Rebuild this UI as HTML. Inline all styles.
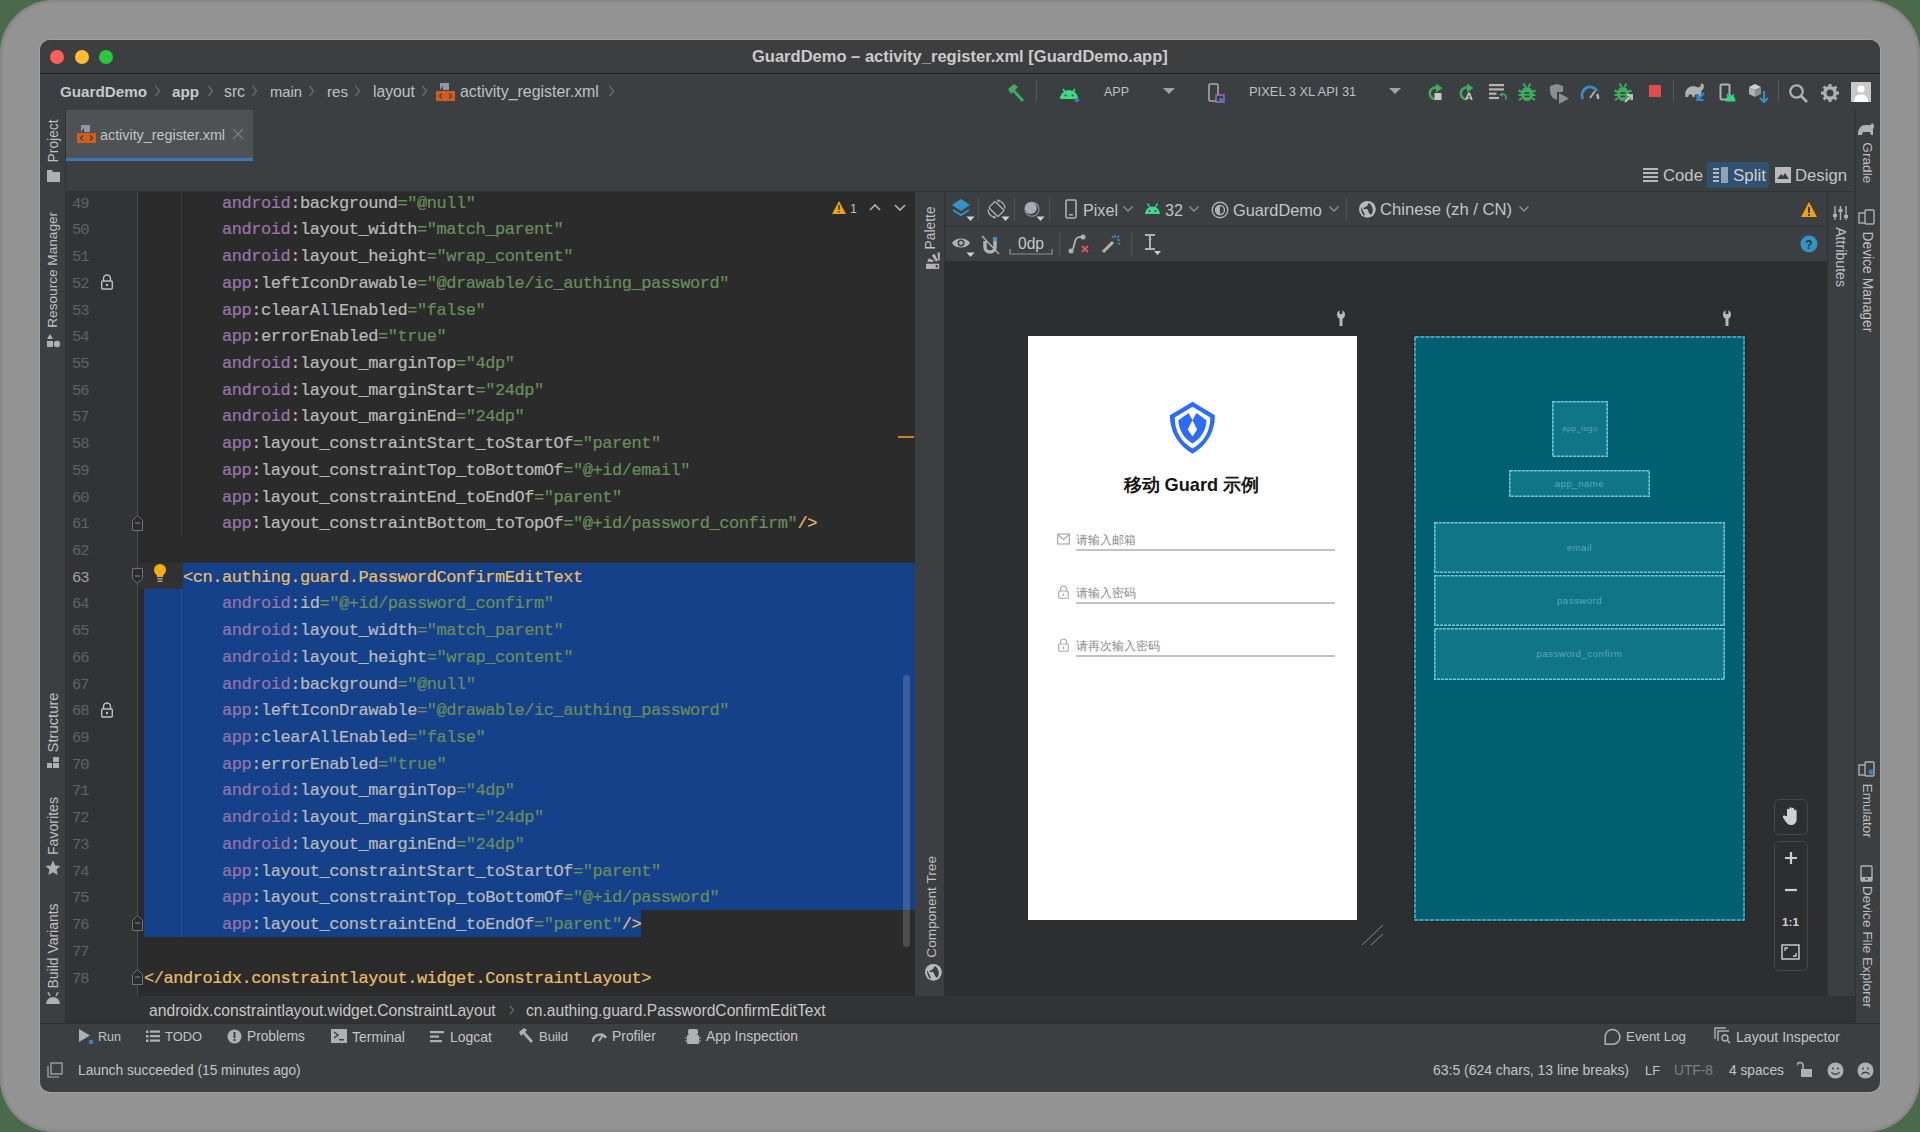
<!DOCTYPE html>
<html><head><meta charset="utf-8">
<style>
*{margin:0;padding:0;box-sizing:border-box}
html,body{width:1920px;height:1132px;overflow:hidden;background:#4b6a4b;font-family:"Liberation Sans",sans-serif}
.a{position:absolute}
.t{position:absolute;white-space:pre}
</style></head>
<body>
<div class="a" style="left:0px;top:0px;width:1920px;height:1132px;background:#939393;border-radius:54px;box-shadow:inset 0 0 2px 2px #858585;"></div>
<div class="a" style="left:40px;top:40px;width:1840px;height:1052px;background:#3c3f41;border-radius:10px;box-shadow:0 0 0 1px rgba(255,255,255,0.12);"></div>
<div class="a" style="left:40px;top:40px;width:1840px;height:33px;background:#3d3e40;border-radius:10px 10px 0 0;"></div>
<div class="a" style="left:40px;top:73px;width:1840px;height:1px;background:#1f2021;"></div>
<div class="a" style="left:50px;top:50px;width:14px;height:14px;background:#fe5f57;border-radius:50%;"></div>
<div class="a" style="left:75px;top:50px;width:14px;height:14px;background:#febc2e;border-radius:50%;"></div>
<div class="a" style="left:99px;top:50px;width:14px;height:14px;background:#28c840;border-radius:50%;"></div>
<div class="t" style="left:752px;top:48.74px;font-size:16.52px;line-height:16.52px;color:#cacaca;font-weight:bold;font-family:'Liberation Sans';">GuardDemo – activity_register.xml [GuardDemo.app]</div>
<div class="a" style="left:40px;top:74px;width:1840px;height:35px;background:#3c3f41;"></div>
<div class="t" style="left:60px;top:84.4px;font-size:15.2px;line-height:15.2px;color:#c8c8c8;font-weight:bold;font-family:'Liberation Sans';">GuardDemo</div>
<div class="t" style="left:172px;top:84.41px;font-size:15.19px;line-height:15.19px;color:#c8c8c8;font-weight:bold;font-family:'Liberation Sans';">app</div>
<div class="t" style="left:224px;top:84.12px;font-size:15.75px;line-height:15.75px;color:#c0c0c0;font-weight:normal;font-family:'Liberation Sans';">src</div>
<div class="t" style="left:270px;top:84.62px;font-size:14.76px;line-height:14.76px;color:#c0c0c0;font-weight:normal;font-family:'Liberation Sans';">main</div>
<div class="t" style="left:327px;top:84.44px;font-size:15.12px;line-height:15.12px;color:#c0c0c0;font-weight:normal;font-family:'Liberation Sans';">res</div>
<div class="t" style="left:373px;top:84.13px;font-size:15.74px;line-height:15.74px;color:#c0c0c0;font-weight:normal;font-family:'Liberation Sans';">layout</div>
<div class="t" style="left:460px;top:84.03px;font-size:15.93px;line-height:15.93px;color:#c0c0c0;font-weight:normal;font-family:'Liberation Sans';">activity_register.xml</div>
<svg class="a" style="left:154px;top:85px;" width="8" height="12" viewBox="0 0 8 12"><path d="M1.5 1 L5.5 6 L1.5 11" stroke="#6b6e70" stroke-width="1.3" fill="none"/></svg>
<svg class="a" style="left:207px;top:85px;" width="8" height="12" viewBox="0 0 8 12"><path d="M1.5 1 L5.5 6 L1.5 11" stroke="#6b6e70" stroke-width="1.3" fill="none"/></svg>
<svg class="a" style="left:251px;top:85px;" width="8" height="12" viewBox="0 0 8 12"><path d="M1.5 1 L5.5 6 L1.5 11" stroke="#6b6e70" stroke-width="1.3" fill="none"/></svg>
<svg class="a" style="left:308px;top:85px;" width="8" height="12" viewBox="0 0 8 12"><path d="M1.5 1 L5.5 6 L1.5 11" stroke="#6b6e70" stroke-width="1.3" fill="none"/></svg>
<svg class="a" style="left:354px;top:85px;" width="8" height="12" viewBox="0 0 8 12"><path d="M1.5 1 L5.5 6 L1.5 11" stroke="#6b6e70" stroke-width="1.3" fill="none"/></svg>
<svg class="a" style="left:421px;top:85px;" width="8" height="12" viewBox="0 0 8 12"><path d="M1.5 1 L5.5 6 L1.5 11" stroke="#6b6e70" stroke-width="1.3" fill="none"/></svg>
<svg class="a" style="left:608px;top:85px;" width="8" height="12" viewBox="0 0 8 12"><path d="M1.5 1 L5.5 6 L1.5 11" stroke="#6b6e70" stroke-width="1.3" fill="none"/></svg>
<svg class="a" style="left:436px;top:82px;" width="19" height="19" viewBox="0 0 19 19"><path d="M4 1 L13 1 L13 8 L4 8 Z" fill="#8a98a8"/><path d="M4 8 L7 4 L7 8Z" fill="#3c3f41"/><rect x="0" y="9" width="19" height="10" fill="#d35d1e"/><path d="M6 11.5 L3.5 14 L6 16.5 M13 11.5 L15.5 14 L13 16.5" stroke="#3c3f41" stroke-width="1.2" fill="none"/></svg>
<svg class="a" style="left:1005px;top:82.5px;" width="22" height="20" viewBox="0 0 22 20"><path d="M3 6 L9 1 L13 4 L10 7 L19 17 L17 19 L8 9 L6 11 Z" fill="#3fae5a"/></svg>
<div class="a" style="left:1036px;top:80px;width:1px;height:22px;background:#555759;"></div>
<svg class="a" style="left:1058px;top:84.5px;" width="22" height="17" viewBox="0 0 22 17"><path d="M2 14 A9 9 0 0 1 20 14 Z" fill="#3ddc84"/><path d="M5 4 L7 7 M17 4 L15 7" stroke="#3ddc84" stroke-width="1.6"/><circle cx="7.5" cy="10.5" r="1" fill="#3c3f41"/><circle cx="14.5" cy="10.5" r="1" fill="#3c3f41"/><circle cx="19" cy="15" r="2.2" fill="#3d7fc6"/></svg>
<div class="t" style="left:1104px;top:85.75px;font-size:12.49px;line-height:12.49px;color:#c0c0c0;font-weight:normal;font-family:'Liberation Sans';">APP</div>
<svg class="a" style="left:1162px;top:87px;" width="14" height="8" viewBox="0 0 14 8"><path d="M1 1 L13 1 L7 7 Z" fill="#a0a2a4"/></svg>
<svg class="a" style="left:1207px;top:82.5px;" width="20" height="22" viewBox="0 0 20 22"><rect x="2" y="1" width="9" height="17" rx="1.5" stroke="#a9abad" stroke-width="1.6" fill="none"/><rect x="9" y="12" width="8" height="7" stroke="#b06ac8" stroke-width="1.4" fill="#3c3f41"/><circle cx="14" cy="17" r="2" fill="#3d7fc6"/></svg>
<div class="t" style="left:1249px;top:85.55px;font-size:12.9px;line-height:12.9px;color:#c0c0c0;font-weight:normal;font-family:'Liberation Sans';">PIXEL 3 XL API 31</div>
<svg class="a" style="left:1388px;top:87px;" width="14" height="8" viewBox="0 0 14 8"><path d="M1 1 L13 1 L7 7 Z" fill="#a0a2a4"/></svg>
<svg class="a" style="left:1423px;top:80px;" width="22" height="22" viewBox="0 0 22 22"><path d="M13.4 7.6 A5.6 5.6 0 1 0 11.8 19.2" stroke="#3fae5a" stroke-width="2.6" fill="none"/><path d="M13 3.5 L19.5 8 L13 12.5 Z" fill="#3fae5a"/><rect x="11.5" y="13" width="7" height="7" fill="#c8c8c8"/></svg>
<svg class="a" style="left:1454px;top:80px;" width="22" height="22" viewBox="0 0 22 22"><path d="M13.4 7.6 A5.6 5.6 0 1 0 11.8 19.2" stroke="#3fae5a" stroke-width="2.6" fill="none"/><path d="M13 3.5 L19.5 8 L13 12.5 Z" fill="#3fae5a"/><path d="M11.2 20 L14 12.5 L16 12.5 L18.8 20 L17 20 L15 14.5 L13 20 Z M13.2 17.5 L16.8 17.5 L16.8 18.6 L13.2 18.6 Z" fill="#c8c8c8"/></svg>
<svg class="a" style="left:1487px;top:83px;" width="22" height="20" viewBox="0 0 22 20"><rect x="2" y="1" width="15" height="2.2" fill="#b4b4b4"/><rect x="2" y="5.3" width="15" height="2.2" fill="#b4b4b4"/><rect x="2" y="9.6" width="7.5" height="2.2" fill="#b4b4b4"/><rect x="2" y="13.9" width="10" height="2.2" fill="#b4b4b4"/><path d="M14 11.5 C17 10 20 12 18.5 16.5" stroke="#3fae5a" stroke-width="1.6" fill="none"/><path d="M12 11.8 L15.5 9.5 L15.5 13.8 Z" fill="#3fae5a"/></svg>
<svg class="a" style="left:1517px;top:81.5px;" width="22" height="22" viewBox="0 0 22 22"><ellipse cx="10" cy="12" rx="6" ry="7" fill="#3fae5a"/><path d="M1.5 8.5 L5 10 M18.5 8.5 L15 10 M1.5 13 L5 13 M18.5 13 L15 13 M2 18 L5 16 M18 18 L15 16 M6.5 1.5 L8.5 5 M13.5 1.5 L11.5 5" stroke="#3fae5a" stroke-width="2"/><rect x="7.5" y="10.2" width="5" height="1.6" fill="#3c3f41"/><rect x="7.5" y="13.6" width="5" height="1.6" fill="#3c3f41"/></svg>
<svg class="a" style="left:1548px;top:82.5px;" width="24" height="22" viewBox="0 0 24 22"><path d="M2 3 L9 1 L15 3 L15 9 L9 9 L9 17 L5 15 C3 13 2 10 2 7 Z" fill="#8c8e90"/><path d="M11 10 L21 15.5 L11 21 Z" fill="#8c8e90"/></svg>
<svg class="a" style="left:1580px;top:82.5px;" width="22" height="20" viewBox="0 0 22 20"><path d="M3 16 A8 8 0 0 1 17 8" stroke="#3592c4" stroke-width="2.6" fill="none"/><path d="M18 16 A8 8 0 0 0 17 11" stroke="#afb1b3" stroke-width="2.6" fill="none"/><path d="M10 15 L15 8" stroke="#afb1b3" stroke-width="2"/></svg>
<svg class="a" style="left:1613px;top:81.5px;" width="22" height="22" viewBox="0 0 22 22"><ellipse cx="10" cy="12" rx="6" ry="7" fill="#3fae5a"/><path d="M1.5 8.5 L5 10 M18.5 8.5 L15 10 M1.5 13 L5 13 M18.5 13 L15 13 M2 18 L5 16 M18 18 L15 16 M6.5 1.5 L8.5 5 M13.5 1.5 L11.5 5" stroke="#3fae5a" stroke-width="2"/><rect x="7.5" y="10.2" width="5" height="1.6" fill="#3c3f41"/><rect x="7.5" y="13.6" width="5" height="1.6" fill="#3c3f41"/><path d="M12 20 L19 13 M14 13 L19 13 L19 18" stroke="#c0c0c0" stroke-width="2" fill="none"/></svg>
<div class="a" style="left:1649px;top:85px;width:12px;height:12px;background:#db504a;"></div>
<div class="a" style="left:1673px;top:80px;width:1px;height:22px;background:#555759;"></div>
<svg class="a" style="left:1683px;top:81px;" width="24" height="22" viewBox="0 0 24 22"><path d="M2.5 16 C1.5 10 4 6.5 8 5.5 C11 4.8 13 5.5 15 6.5 C17 6 18.5 4.5 18 3.5 C17.5 2.5 19.5 2 20.5 3.5 C21.5 5 20.5 8.5 18.5 10 L18 16 L16 16 L15.5 13 L12 13.5 L11.5 16 L9.5 16 L9 13.5 L6 13.5 L5 16 Z" fill="#afb1b3"/><path d="M21 12 L15 18.5 M14.5 13 L14.5 19 L20.5 19" stroke="#2a8fd0" stroke-width="2.2" fill="none"/></svg>
<svg class="a" style="left:1716px;top:81px;" width="22" height="22" viewBox="0 0 22 22"><rect x="4.5" y="3.5" width="9" height="15" rx="1.2" stroke="#afb1b3" stroke-width="2" fill="none"/><path d="M9.5 20.5 C9.5 16 12 14 14.5 14 C17 14 19.5 16 19.5 20.5 Z" fill="#2fd97e"/><path d="M11 13 L12 15 M18 13 L17 15" stroke="#2fd97e" stroke-width="1.4"/></svg>
<svg class="a" style="left:1747px;top:81.5px;" width="22" height="22" viewBox="0 0 22 22"><path d="M2 5 L8 2 L14 5 L8 8 Z" fill="#d0d0d0"/><path d="M2 5 L8 8 L8 15 L2 12 Z" fill="#afb1b3"/><path d="M14 5 L8 8 L8 15 L14 12 Z" fill="#8a8c8e"/><path d="M17 9 L17 20 M13 16 L17 20 L21 16" stroke="#3592c4" stroke-width="2" fill="none"/></svg>
<div class="a" style="left:1778px;top:80px;width:1px;height:22px;background:#555759;"></div>
<svg class="a" style="left:1788px;top:82.5px;" width="22" height="22" viewBox="0 0 22 22"><circle cx="8.5" cy="8.5" r="6.2" stroke="#afb1b3" stroke-width="2.2" fill="none"/><path d="M13 13 L19 19" stroke="#afb1b3" stroke-width="2.6"/></svg>
<svg class="a" style="left:1820px;top:82.5px;" width="20" height="20" viewBox="0 0 20 20"><circle cx="10" cy="10" r="5.2" stroke="#afb1b3" stroke-width="3.4" fill="none"/><path d="M10 1 L10 4 M10 16 L10 19 M1 10 L4 10 M16 10 L19 10 M3.6 3.6 L5.8 5.8 M14.2 14.2 L16.4 16.4 M3.6 16.4 L5.8 14.2 M14.2 5.8 L16.4 3.6" stroke="#afb1b3" stroke-width="3"/></svg>
<svg class="a" style="left:1851px;top:81.5px;" width="20" height="20" viewBox="0 0 20 20"><rect x="0" y="0" width="20" height="20" fill="#c8c8c8"/><circle cx="10" cy="7" r="3.6" fill="#ffffff"/><path d="M3 20 C3 14 6 12.5 10 12.5 C14 12.5 17 14 17 20 Z" fill="#ffffff"/></svg>
<div class="a" style="left:40px;top:109px;width:26px;height:914px;background:#3c3f41;"></div>
<div class="a" style="left:65px;top:109px;width:1px;height:914px;background:#2f3133;"></div>
<div class="a" style="left:1855px;top:109px;width:25px;height:914px;background:#3c3f41;"></div>
<div class="a" style="left:1855px;top:109px;width:1px;height:914px;background:#2f3133;"></div>
<div class="a" style="left:66px;top:110px;width:187px;height:48px;background:#4e5254;"></div>
<div class="a" style="left:66px;top:158px;width:187px;height:3px;background:#3b77b5;"></div>
<svg class="a" style="left:77px;top:124px;" width="19" height="19" viewBox="0 0 19 19"><path d="M4 1 L13 1 L13 8 L4 8 Z" fill="#8a98a8"/><path d="M4 8 L7 4 L7 8Z" fill="#3c3f41"/><rect x="0" y="9" width="19" height="10" fill="#d35d1e"/><path d="M6 11.5 L3.5 14 L6 16.5 M13 11.5 L15.5 14 L13 16.5" stroke="#3c3f41" stroke-width="1.2" fill="none"/></svg>
<div class="t" style="left:100px;top:127.83px;font-size:14.33px;line-height:14.33px;color:#c4c4c4;font-weight:normal;font-family:'Liberation Sans';">activity_register.xml</div>
<svg class="a" style="left:232px;top:128px;" width="12" height="12" viewBox="0 0 12 12"><path d="M1 1 L11 11 M11 1 L1 11" stroke="#7c7e80" stroke-width="1.3"/></svg>
<svg class="a" style="left:1643px;top:167px;" width="16" height="16" viewBox="0 0 16 16"><rect x="0" y="1" width="15" height="2" fill="#b9b9b9"/><rect x="0" y="5" width="15" height="2" fill="#b9b9b9"/><rect x="0" y="9" width="15" height="2" fill="#b9b9b9"/><rect x="0" y="13" width="15" height="2" fill="#b9b9b9"/></svg>
<div class="t" style="left:1663px;top:167.63px;font-size:16.73px;line-height:16.73px;color:#c4c4c4;font-weight:normal;font-family:'Liberation Sans';">Code</div>
<div class="a" style="left:1707px;top:162px;width:62px;height:26px;background:#30516f;border-radius:3px;"></div>
<svg class="a" style="left:1713px;top:167px;" width="16" height="16" viewBox="0 0 16 16"><rect x="0" y="1" width="6" height="2" fill="#b9b9b9"/><rect x="0" y="5" width="6" height="2" fill="#b9b9b9"/><rect x="0" y="9" width="6" height="2" fill="#b9b9b9"/><rect x="0" y="13" width="6" height="2" fill="#b9b9b9"/><rect x="8" y="0" width="7" height="16" fill="#8fa3b8"/></svg>
<div class="t" style="left:1733px;top:167.52px;font-size:16.96px;line-height:16.96px;color:#d0d0d0;font-weight:normal;font-family:'Liberation Sans';">Split</div>
<svg class="a" style="left:1775px;top:167px;" width="16" height="16" viewBox="0 0 16 16"><rect x="0" y="0" width="16" height="16" fill="#b9b9b9"/><path d="M2 12 L6 7 L8 9 L10 6 L14 12 Z" fill="#3c3f41"/></svg>
<div class="t" style="left:1795px;top:167.65px;font-size:16.71px;line-height:16.71px;color:#c4c4c4;font-weight:normal;font-family:'Liberation Sans';">Design</div>
<div class="a" style="left:66px;top:191px;width:1789px;height:1px;background:#2f3133;"></div>
<div class="a" style="left:66px;top:192px;width:849px;height:804px;background:#2b2b2b;"></div>
<div class="a" style="left:66px;top:192px;width:71px;height:804px;background:#313335;"></div>
<div class="a" style="left:137px;top:562.72px;width:46px;height:26.72px;background:#323232;"></div>
<div class="a" style="left:183px;top:562.72px;width:732px;height:26.72px;background:#15418a;"></div>
<div class="a" style="left:144px;top:589.44px;width:771px;height:320.64px;background:#15418a;"></div>
<div class="a" style="left:144px;top:910.08px;width:497px;height:26.72px;background:#15418a;"></div>
<div class="a" style="left:181px;top:192px;width:1px;height:344.0px;background:#3b3b3b;"></div>
<div class="a" style="left:181px;top:589.44px;width:1px;height:347.36px;background:#2a5096;"></div>
<div class="a" style="left:137px;top:192px;width:1px;height:804px;background:#4a4c4e;"></div>
<div class="t" style="left:222.0px;top:190.64px;height:26.72px;line-height:26.72px;font-family:'Liberation Mono';font-size:17px;letter-spacing:-0.45px;-webkit-text-stroke:0.2px currentColor"><span style="color:#9876aa">android</span><span style="color:#bababa">:background</span><span style="color:#6a8e5b">=&quot;@null&quot;</span></div>
<div class="t" style="left:48.5px;width:40px;text-align:right;top:190.64px;letter-spacing:-1px;height:26.72px;line-height:26.72px;font-family:'Liberation Mono';font-size:15.5px;color:#606366">49</div>
<div class="t" style="left:222.0px;top:217.36px;height:26.72px;line-height:26.72px;font-family:'Liberation Mono';font-size:17px;letter-spacing:-0.45px;-webkit-text-stroke:0.2px currentColor"><span style="color:#9876aa">android</span><span style="color:#bababa">:layout_width</span><span style="color:#6a8e5b">=&quot;match_parent&quot;</span></div>
<div class="t" style="left:48.5px;width:40px;text-align:right;top:217.36px;letter-spacing:-1px;height:26.72px;line-height:26.72px;font-family:'Liberation Mono';font-size:15.5px;color:#606366">50</div>
<div class="t" style="left:222.0px;top:244.08px;height:26.72px;line-height:26.72px;font-family:'Liberation Mono';font-size:17px;letter-spacing:-0.45px;-webkit-text-stroke:0.2px currentColor"><span style="color:#9876aa">android</span><span style="color:#bababa">:layout_height</span><span style="color:#6a8e5b">=&quot;wrap_content&quot;</span></div>
<div class="t" style="left:48.5px;width:40px;text-align:right;top:244.08px;letter-spacing:-1px;height:26.72px;line-height:26.72px;font-family:'Liberation Mono';font-size:15.5px;color:#606366">51</div>
<div class="t" style="left:222.0px;top:270.8px;height:26.72px;line-height:26.72px;font-family:'Liberation Mono';font-size:17px;letter-spacing:-0.45px;-webkit-text-stroke:0.2px currentColor"><span style="color:#9876aa">app</span><span style="color:#bababa">:leftIconDrawable</span><span style="color:#6a8e5b">=&quot;@drawable/ic_authing_password&quot;</span></div>
<div class="t" style="left:48.5px;width:40px;text-align:right;top:270.8px;letter-spacing:-1px;height:26.72px;line-height:26.72px;font-family:'Liberation Mono';font-size:15.5px;color:#606366">52</div>
<div class="t" style="left:222.0px;top:297.52px;height:26.72px;line-height:26.72px;font-family:'Liberation Mono';font-size:17px;letter-spacing:-0.45px;-webkit-text-stroke:0.2px currentColor"><span style="color:#9876aa">app</span><span style="color:#bababa">:clearAllEnabled</span><span style="color:#6a8e5b">=&quot;false&quot;</span></div>
<div class="t" style="left:48.5px;width:40px;text-align:right;top:297.52px;letter-spacing:-1px;height:26.72px;line-height:26.72px;font-family:'Liberation Mono';font-size:15.5px;color:#606366">53</div>
<div class="t" style="left:222.0px;top:324.24px;height:26.72px;line-height:26.72px;font-family:'Liberation Mono';font-size:17px;letter-spacing:-0.45px;-webkit-text-stroke:0.2px currentColor"><span style="color:#9876aa">app</span><span style="color:#bababa">:errorEnabled</span><span style="color:#6a8e5b">=&quot;true&quot;</span></div>
<div class="t" style="left:48.5px;width:40px;text-align:right;top:324.24px;letter-spacing:-1px;height:26.72px;line-height:26.72px;font-family:'Liberation Mono';font-size:15.5px;color:#606366">54</div>
<div class="t" style="left:222.0px;top:350.96px;height:26.72px;line-height:26.72px;font-family:'Liberation Mono';font-size:17px;letter-spacing:-0.45px;-webkit-text-stroke:0.2px currentColor"><span style="color:#9876aa">android</span><span style="color:#bababa">:layout_marginTop</span><span style="color:#6a8e5b">=&quot;4dp&quot;</span></div>
<div class="t" style="left:48.5px;width:40px;text-align:right;top:350.96px;letter-spacing:-1px;height:26.72px;line-height:26.72px;font-family:'Liberation Mono';font-size:15.5px;color:#606366">55</div>
<div class="t" style="left:222.0px;top:377.68px;height:26.72px;line-height:26.72px;font-family:'Liberation Mono';font-size:17px;letter-spacing:-0.45px;-webkit-text-stroke:0.2px currentColor"><span style="color:#9876aa">android</span><span style="color:#bababa">:layout_marginStart</span><span style="color:#6a8e5b">=&quot;24dp&quot;</span></div>
<div class="t" style="left:48.5px;width:40px;text-align:right;top:377.68px;letter-spacing:-1px;height:26.72px;line-height:26.72px;font-family:'Liberation Mono';font-size:15.5px;color:#606366">56</div>
<div class="t" style="left:222.0px;top:404.4px;height:26.72px;line-height:26.72px;font-family:'Liberation Mono';font-size:17px;letter-spacing:-0.45px;-webkit-text-stroke:0.2px currentColor"><span style="color:#9876aa">android</span><span style="color:#bababa">:layout_marginEnd</span><span style="color:#6a8e5b">=&quot;24dp&quot;</span></div>
<div class="t" style="left:48.5px;width:40px;text-align:right;top:404.4px;letter-spacing:-1px;height:26.72px;line-height:26.72px;font-family:'Liberation Mono';font-size:15.5px;color:#606366">57</div>
<div class="t" style="left:222.0px;top:431.12px;height:26.72px;line-height:26.72px;font-family:'Liberation Mono';font-size:17px;letter-spacing:-0.45px;-webkit-text-stroke:0.2px currentColor"><span style="color:#9876aa">app</span><span style="color:#bababa">:layout_constraintStart_toStartOf</span><span style="color:#6a8e5b">=&quot;parent&quot;</span></div>
<div class="t" style="left:48.5px;width:40px;text-align:right;top:431.12px;letter-spacing:-1px;height:26.72px;line-height:26.72px;font-family:'Liberation Mono';font-size:15.5px;color:#606366">58</div>
<div class="t" style="left:222.0px;top:457.84px;height:26.72px;line-height:26.72px;font-family:'Liberation Mono';font-size:17px;letter-spacing:-0.45px;-webkit-text-stroke:0.2px currentColor"><span style="color:#9876aa">app</span><span style="color:#bababa">:layout_constraintTop_toBottomOf</span><span style="color:#6a8e5b">=&quot;@+id/email&quot;</span></div>
<div class="t" style="left:48.5px;width:40px;text-align:right;top:457.84px;letter-spacing:-1px;height:26.72px;line-height:26.72px;font-family:'Liberation Mono';font-size:15.5px;color:#606366">59</div>
<div class="t" style="left:222.0px;top:484.56px;height:26.72px;line-height:26.72px;font-family:'Liberation Mono';font-size:17px;letter-spacing:-0.45px;-webkit-text-stroke:0.2px currentColor"><span style="color:#9876aa">app</span><span style="color:#bababa">:layout_constraintEnd_toEndOf</span><span style="color:#6a8e5b">=&quot;parent&quot;</span></div>
<div class="t" style="left:48.5px;width:40px;text-align:right;top:484.56px;letter-spacing:-1px;height:26.72px;line-height:26.72px;font-family:'Liberation Mono';font-size:15.5px;color:#606366">60</div>
<div class="t" style="left:222.0px;top:511.28px;height:26.72px;line-height:26.72px;font-family:'Liberation Mono';font-size:17px;letter-spacing:-0.45px;-webkit-text-stroke:0.2px currentColor"><span style="color:#9876aa">app</span><span style="color:#bababa">:layout_constraintBottom_toTopOf</span><span style="color:#6a8e5b">=&quot;@+id/password_confirm&quot;</span><span style="color:#e8bf6a">/&gt;</span></div>
<div class="t" style="left:48.5px;width:40px;text-align:right;top:511.28px;letter-spacing:-1px;height:26.72px;line-height:26.72px;font-family:'Liberation Mono';font-size:15.5px;color:#606366">61</div>
<div class="t" style="left:48.5px;width:40px;text-align:right;top:538.0px;letter-spacing:-1px;height:26.72px;line-height:26.72px;font-family:'Liberation Mono';font-size:15.5px;color:#606366">62</div>
<div class="t" style="left:183.0px;top:564.72px;height:26.72px;line-height:26.72px;font-family:'Liberation Mono';font-size:17px;letter-spacing:-0.45px;-webkit-text-stroke:0.2px currentColor"><span style="color:#e8bf6a">&lt;cn.authing.guard.PasswordConfirmEditText</span></div>
<div class="t" style="left:48.5px;width:40px;text-align:right;top:564.72px;letter-spacing:-1px;height:26.72px;line-height:26.72px;font-family:'Liberation Mono';font-size:15.5px;color:#a4a3a3">63</div>
<div class="t" style="left:222.0px;top:591.44px;height:26.72px;line-height:26.72px;font-family:'Liberation Mono';font-size:17px;letter-spacing:-0.45px;-webkit-text-stroke:0.2px currentColor"><span style="color:#9876aa">android</span><span style="color:#bababa">:id</span><span style="color:#6a8e5b">=&quot;@+id/password_confirm&quot;</span></div>
<div class="t" style="left:48.5px;width:40px;text-align:right;top:591.44px;letter-spacing:-1px;height:26.72px;line-height:26.72px;font-family:'Liberation Mono';font-size:15.5px;color:#606366">64</div>
<div class="t" style="left:222.0px;top:618.16px;height:26.72px;line-height:26.72px;font-family:'Liberation Mono';font-size:17px;letter-spacing:-0.45px;-webkit-text-stroke:0.2px currentColor"><span style="color:#9876aa">android</span><span style="color:#bababa">:layout_width</span><span style="color:#6a8e5b">=&quot;match_parent&quot;</span></div>
<div class="t" style="left:48.5px;width:40px;text-align:right;top:618.16px;letter-spacing:-1px;height:26.72px;line-height:26.72px;font-family:'Liberation Mono';font-size:15.5px;color:#606366">65</div>
<div class="t" style="left:222.0px;top:644.88px;height:26.72px;line-height:26.72px;font-family:'Liberation Mono';font-size:17px;letter-spacing:-0.45px;-webkit-text-stroke:0.2px currentColor"><span style="color:#9876aa">android</span><span style="color:#bababa">:layout_height</span><span style="color:#6a8e5b">=&quot;wrap_content&quot;</span></div>
<div class="t" style="left:48.5px;width:40px;text-align:right;top:644.88px;letter-spacing:-1px;height:26.72px;line-height:26.72px;font-family:'Liberation Mono';font-size:15.5px;color:#606366">66</div>
<div class="t" style="left:222.0px;top:671.6px;height:26.72px;line-height:26.72px;font-family:'Liberation Mono';font-size:17px;letter-spacing:-0.45px;-webkit-text-stroke:0.2px currentColor"><span style="color:#9876aa">android</span><span style="color:#bababa">:background</span><span style="color:#6a8e5b">=&quot;@null&quot;</span></div>
<div class="t" style="left:48.5px;width:40px;text-align:right;top:671.6px;letter-spacing:-1px;height:26.72px;line-height:26.72px;font-family:'Liberation Mono';font-size:15.5px;color:#606366">67</div>
<div class="t" style="left:222.0px;top:698.32px;height:26.72px;line-height:26.72px;font-family:'Liberation Mono';font-size:17px;letter-spacing:-0.45px;-webkit-text-stroke:0.2px currentColor"><span style="color:#9876aa">app</span><span style="color:#bababa">:leftIconDrawable</span><span style="color:#6a8e5b">=&quot;@drawable/ic_authing_password&quot;</span></div>
<div class="t" style="left:48.5px;width:40px;text-align:right;top:698.32px;letter-spacing:-1px;height:26.72px;line-height:26.72px;font-family:'Liberation Mono';font-size:15.5px;color:#606366">68</div>
<div class="t" style="left:222.0px;top:725.04px;height:26.72px;line-height:26.72px;font-family:'Liberation Mono';font-size:17px;letter-spacing:-0.45px;-webkit-text-stroke:0.2px currentColor"><span style="color:#9876aa">app</span><span style="color:#bababa">:clearAllEnabled</span><span style="color:#6a8e5b">=&quot;false&quot;</span></div>
<div class="t" style="left:48.5px;width:40px;text-align:right;top:725.04px;letter-spacing:-1px;height:26.72px;line-height:26.72px;font-family:'Liberation Mono';font-size:15.5px;color:#606366">69</div>
<div class="t" style="left:222.0px;top:751.76px;height:26.72px;line-height:26.72px;font-family:'Liberation Mono';font-size:17px;letter-spacing:-0.45px;-webkit-text-stroke:0.2px currentColor"><span style="color:#9876aa">app</span><span style="color:#bababa">:errorEnabled</span><span style="color:#6a8e5b">=&quot;true&quot;</span></div>
<div class="t" style="left:48.5px;width:40px;text-align:right;top:751.76px;letter-spacing:-1px;height:26.72px;line-height:26.72px;font-family:'Liberation Mono';font-size:15.5px;color:#606366">70</div>
<div class="t" style="left:222.0px;top:778.48px;height:26.72px;line-height:26.72px;font-family:'Liberation Mono';font-size:17px;letter-spacing:-0.45px;-webkit-text-stroke:0.2px currentColor"><span style="color:#9876aa">android</span><span style="color:#bababa">:layout_marginTop</span><span style="color:#6a8e5b">=&quot;4dp&quot;</span></div>
<div class="t" style="left:48.5px;width:40px;text-align:right;top:778.48px;letter-spacing:-1px;height:26.72px;line-height:26.72px;font-family:'Liberation Mono';font-size:15.5px;color:#606366">71</div>
<div class="t" style="left:222.0px;top:805.2px;height:26.72px;line-height:26.72px;font-family:'Liberation Mono';font-size:17px;letter-spacing:-0.45px;-webkit-text-stroke:0.2px currentColor"><span style="color:#9876aa">android</span><span style="color:#bababa">:layout_marginStart</span><span style="color:#6a8e5b">=&quot;24dp&quot;</span></div>
<div class="t" style="left:48.5px;width:40px;text-align:right;top:805.2px;letter-spacing:-1px;height:26.72px;line-height:26.72px;font-family:'Liberation Mono';font-size:15.5px;color:#606366">72</div>
<div class="t" style="left:222.0px;top:831.92px;height:26.72px;line-height:26.72px;font-family:'Liberation Mono';font-size:17px;letter-spacing:-0.45px;-webkit-text-stroke:0.2px currentColor"><span style="color:#9876aa">android</span><span style="color:#bababa">:layout_marginEnd</span><span style="color:#6a8e5b">=&quot;24dp&quot;</span></div>
<div class="t" style="left:48.5px;width:40px;text-align:right;top:831.92px;letter-spacing:-1px;height:26.72px;line-height:26.72px;font-family:'Liberation Mono';font-size:15.5px;color:#606366">73</div>
<div class="t" style="left:222.0px;top:858.64px;height:26.72px;line-height:26.72px;font-family:'Liberation Mono';font-size:17px;letter-spacing:-0.45px;-webkit-text-stroke:0.2px currentColor"><span style="color:#9876aa">app</span><span style="color:#bababa">:layout_constraintStart_toStartOf</span><span style="color:#6a8e5b">=&quot;parent&quot;</span></div>
<div class="t" style="left:48.5px;width:40px;text-align:right;top:858.64px;letter-spacing:-1px;height:26.72px;line-height:26.72px;font-family:'Liberation Mono';font-size:15.5px;color:#606366">74</div>
<div class="t" style="left:222.0px;top:885.36px;height:26.72px;line-height:26.72px;font-family:'Liberation Mono';font-size:17px;letter-spacing:-0.45px;-webkit-text-stroke:0.2px currentColor"><span style="color:#9876aa">app</span><span style="color:#bababa">:layout_constraintTop_toBottomOf</span><span style="color:#6a8e5b">=&quot;@+id/password&quot;</span></div>
<div class="t" style="left:48.5px;width:40px;text-align:right;top:885.36px;letter-spacing:-1px;height:26.72px;line-height:26.72px;font-family:'Liberation Mono';font-size:15.5px;color:#606366">75</div>
<div class="t" style="left:222.0px;top:912.08px;height:26.72px;line-height:26.72px;font-family:'Liberation Mono';font-size:17px;letter-spacing:-0.45px;-webkit-text-stroke:0.2px currentColor"><span style="color:#9876aa">app</span><span style="color:#bababa">:layout_constraintEnd_toEndOf</span><span style="color:#6a8e5b">=&quot;parent&quot;</span><span style="color:#e8bf6a">/&gt;</span></div>
<div class="t" style="left:48.5px;width:40px;text-align:right;top:912.08px;letter-spacing:-1px;height:26.72px;line-height:26.72px;font-family:'Liberation Mono';font-size:15.5px;color:#606366">76</div>
<div class="t" style="left:48.5px;width:40px;text-align:right;top:938.8px;letter-spacing:-1px;height:26.72px;line-height:26.72px;font-family:'Liberation Mono';font-size:15.5px;color:#606366">77</div>
<div class="t" style="left:144.0px;top:965.52px;height:26.72px;line-height:26.72px;font-family:'Liberation Mono';font-size:17px;letter-spacing:-0.45px;-webkit-text-stroke:0.2px currentColor"><span style="color:#e8bf6a">&lt;/androidx.constraintlayout.widget.ConstraintLayout&gt;</span></div>
<div class="t" style="left:48.5px;width:40px;text-align:right;top:965.52px;letter-spacing:-1px;height:26.72px;line-height:26.72px;font-family:'Liberation Mono';font-size:15.5px;color:#606366">78</div>
<svg class="a" style="left:100px;top:274.16px;" width="14" height="16" viewBox="0 0 14 16"><path d="M3.5 7 L3.5 4.5 A3.5 3.5 0 0 1 10.5 4.5 L10.5 7" stroke="#bfbfbf" stroke-width="1.4" fill="none"/><rect x="1.7" y="7" width="10.6" height="8" rx="1" stroke="#bfbfbf" stroke-width="1.4" fill="none"/><circle cx="7" cy="11" r="1.2" fill="#bfbfbf"/></svg>
<svg class="a" style="left:100px;top:701.68px;" width="14" height="16" viewBox="0 0 14 16"><path d="M3.5 7 L3.5 4.5 A3.5 3.5 0 0 1 10.5 4.5 L10.5 7" stroke="#bfbfbf" stroke-width="1.4" fill="none"/><rect x="1.7" y="7" width="10.6" height="8" rx="1" stroke="#bfbfbf" stroke-width="1.4" fill="none"/><circle cx="7" cy="11" r="1.2" fill="#bfbfbf"/></svg>
<svg class="a" style="left:132px;top:514.64px;" width="11" height="16" viewBox="0 0 11 16"><path d="M0.5 15.5 L0.5 5.5 L5.5 0.5 L10.5 5.5 L10.5 15.5 Z" stroke="#6f7173" stroke-width="1" fill="#2b2b2b"/><path d="M3 8 L8 8" stroke="#8a8c8e" stroke-width="1"/></svg>
<svg class="a" style="left:132px;top:568.08px;" width="11" height="16" viewBox="0 0 11 16"><path d="M0.5 0.5 L10.5 0.5 L10.5 10.5 L5.5 15.5 L0.5 10.5 Z" stroke="#6f7173" stroke-width="1" fill="#2b2b2b"/><path d="M3 8 L8 8" stroke="#8a8c8e" stroke-width="1"/></svg>
<svg class="a" style="left:132px;top:915.44px;" width="11" height="16" viewBox="0 0 11 16"><path d="M0.5 15.5 L0.5 5.5 L5.5 0.5 L10.5 5.5 L10.5 15.5 Z" stroke="#6f7173" stroke-width="1" fill="#2b2b2b"/><path d="M3 8 L8 8" stroke="#8a8c8e" stroke-width="1"/></svg>
<svg class="a" style="left:132px;top:968.88px;" width="11" height="16" viewBox="0 0 11 16"><path d="M0.5 15.5 L0.5 5.5 L5.5 0.5 L10.5 5.5 L10.5 15.5 Z" stroke="#6f7173" stroke-width="1" fill="#2b2b2b"/><path d="M3 8 L8 8" stroke="#8a8c8e" stroke-width="1"/></svg>
<svg class="a" style="left:152px;top:563.08px;" width="16" height="20" viewBox="0 0 16 20"><circle cx="8" cy="7" r="6" fill="#f4af0e"/><rect x="5" y="12" width="6" height="2" fill="#f4af0e"/><rect x="5.5" y="15" width="5" height="1.5" fill="#a0a0a0"/><rect x="5.5" y="17.5" width="5" height="1.5" fill="#a0a0a0"/></svg>
<svg class="a" style="left:831px;top:200px;" width="16" height="15" viewBox="0 0 16 15"><path d="M8 1 L15 14 L1 14 Z" fill="#f0a30a"/><rect x="7.2" y="5" width="1.6" height="5" fill="#3c3f41"/><rect x="7.2" y="11" width="1.6" height="1.6" fill="#3c3f41"/></svg>
<div class="t" style="left:850px;top:202.71px;font-size:12.59px;line-height:12.59px;color:#bbbbbb;font-weight:normal;font-family:'Liberation Sans';">1</div>
<svg class="a" style="left:868px;top:202px;" width="14" height="10" viewBox="0 0 14 10"><path d="M2 8 L7 3 L12 8" stroke="#afb1b3" stroke-width="1.6" fill="none"/></svg>
<svg class="a" style="left:893px;top:203px;" width="14" height="10" viewBox="0 0 14 10"><path d="M2 2 L7 7 L12 2" stroke="#afb1b3" stroke-width="1.6" fill="none"/></svg>
<div class="a" style="left:898px;top:436px;width:16px;height:2px;background:#c7822a;"></div>
<div class="a" style="left:903px;top:675px;width:7px;height:272px;background:rgba(255,255,255,0.16);border-radius:4px;"></div>
<div class="a" style="left:915px;top:192px;width:29px;height:804px;background:#3c3f41;"></div>
<div class="a" style="left:944px;top:192px;width:1px;height:804px;background:#2f3133;"></div>
<div class="t" style="left:908.5px;top:220.59px;width:43px;text-align:center;font-size:13.81px;line-height:13.81px;color:#c0c0c0;font-weight:normal;transform:rotate(-90deg);">Palette</div>
<svg class="a" style="left:922px;top:248px;" width="20" height="24" viewBox="0 0 20 24"><rect x="4" y="15.7" width="13.2" height="5.2" fill="#b4b4b4"/><circle cx="14.8" cy="18.2" r="1.2" fill="#3c3f41"/><path d="M5.2 13.8 L6.8 10.2 L11.8 12.6 L11.2 14 Z" fill="#b4b4b4"/><path d="M9.8 7.6 L12.4 5.8 L16.2 12.6 L13.8 13.6 Z" fill="#b4b4b4"/><path d="M15.4 4.4 L17.8 4.4 L17.8 12.6 L16.4 12.6 Z" fill="#b4b4b4"/></svg>
<div class="t" style="left:881.0px;top:900.17px;width:102px;text-align:center;font-size:13.66px;line-height:13.66px;color:#c0c0c0;font-weight:normal;transform:rotate(-90deg);">Component Tree</div>
<svg class="a" style="left:924px;top:963px;" width="19" height="19" viewBox="0 0 19 19"><circle cx="9.4" cy="9.3" r="8.4" fill="#b8b9bb"/><path d="M3.2 7.5 C4.5 10 6 12.5 7.2 15.2 L6 15.6 C4.5 14 3 11.5 3 8 Z" fill="#3c3f41"/><path d="M5.2 8 L7.5 7 L9.5 5.5 L10.5 3 C13 4 14.8 7 14.8 10 C14.8 12 14.2 13.5 13 14.8 C11.5 14 10.5 12.5 10 10.5 L9 8.8 L6 9.2 Z" fill="#3c3f41"/></svg>
<div class="a" style="left:945px;top:192px;width:882px;height:34px;background:#3c3f41;"></div>
<div class="a" style="left:945px;top:226px;width:882px;height:1px;background:#2f3133;"></div>
<div class="a" style="left:945px;top:227px;width:882px;height:34px;background:#3c3f41;"></div>
<div class="a" style="left:945px;top:261px;width:882px;height:1px;background:#2f3133;"></div>
<div class="a" style="left:945px;top:262px;width:882px;height:734px;background:#2d2e30;"></div>
<svg class="a" style="left:951px;top:198px;" width="22" height="22" viewBox="0 0 22 22"><path d="M10 1 L19 7 L10 13 L1 7 Z" fill="#3592c4"/><path d="M2 12 L10 17 L18 12" stroke="#3592c4" stroke-width="2" fill="none"/></svg>
<svg class="a" style="left:966px;top:216px;" width="9" height="6" viewBox="0 0 9 6"><path d="M0.5 0.5 L8.5 0.5 L4.5 5 Z" fill="#d0d0d0"/></svg>
<div class="a" style="left:978px;top:198px;width:1px;height:23px;background:#505254;"></div>
<svg class="a" style="left:985px;top:198px;" width="24" height="24" viewBox="0 0 24 24"><g transform="rotate(-45 11.5 11)"><rect x="7" y="4.5" width="9" height="13" rx="1" stroke="#afb1b3" stroke-width="1.3" fill="none"/></g><path d="M13.5 2.5 A9 9 0 0 1 20 10.5" stroke="#afb1b3" stroke-width="1.3" fill="none"/><path d="M12 1.5 L15.5 2 L13 4.5 Z" fill="#afb1b3"/><path d="M3 11.5 A9 9 0 0 0 9.5 19.5" stroke="#afb1b3" stroke-width="1.3" fill="none"/><path d="M11 20.5 L7.5 20 L10 17.5 Z" fill="#afb1b3"/></svg>
<svg class="a" style="left:1001px;top:216px;" width="9" height="6" viewBox="0 0 9 6"><path d="M0.5 0.5 L8.5 0.5 L4.5 5 Z" fill="#d0d0d0"/></svg>
<div class="a" style="left:1014px;top:198px;width:1px;height:23px;background:#505254;"></div>
<svg class="a" style="left:1023px;top:200px;" width="20" height="20" viewBox="0 0 20 20"><circle cx="9" cy="9.2" r="7" fill="#3c3f41" stroke="#9a9c9e" stroke-width="1.1"/><circle cx="7.8" cy="8" r="6" fill="#a3acbe"/></svg>
<svg class="a" style="left:1036px;top:216px;" width="9" height="6" viewBox="0 0 9 6"><path d="M0.5 0.5 L8.5 0.5 L4.5 5 Z" fill="#d0d0d0"/></svg>
<div class="a" style="left:1049px;top:198px;width:1px;height:23px;background:#505254;"></div>
<svg class="a" style="left:1065px;top:199px;" width="12" height="20" viewBox="0 0 12 20"><rect x="1" y="1" width="10" height="18" rx="1.5" stroke="#afb1b3" stroke-width="1.6" fill="none"/><rect x="4" y="15" width="4" height="1.5" fill="#afb1b3"/></svg>
<div class="t" style="left:1083px;top:201.93px;font-size:16.15px;line-height:16.15px;color:#c4c4c4;font-weight:normal;font-family:'Liberation Sans';">Pixel</div>
<svg class="a" style="left:1122px;top:205px;" width="12" height="8" viewBox="0 0 12 8"><path d="M1.5 1.5 L6 6 L10.5 1.5" stroke="#8e9092" stroke-width="1.4" fill="none"/></svg>
<svg class="a" style="left:1144px;top:202px;" width="17" height="13" viewBox="0 0 17 13"><path d="M1 12 A7.5 7.5 0 0 1 16 12 Z" fill="#3ddc84"/><path d="M3.5 1.5 L5.5 5 M13.5 1.5 L11.5 5" stroke="#3ddc84" stroke-width="1.5"/><circle cx="5.5" cy="9" r="0.9" fill="#3c3f41"/><circle cx="11.5" cy="9" r="0.9" fill="#3c3f41"/></svg>
<div class="t" style="left:1165px;top:201.91px;font-size:16.18px;line-height:16.18px;color:#c4c4c4;font-weight:normal;font-family:'Liberation Sans';">32</div>
<svg class="a" style="left:1188px;top:205px;" width="12" height="8" viewBox="0 0 12 8"><path d="M1.5 1.5 L6 6 L10.5 1.5" stroke="#8e9092" stroke-width="1.4" fill="none"/></svg>
<svg class="a" style="left:1211px;top:201px;" width="18" height="18" viewBox="0 0 18 18"><circle cx="9" cy="9" r="7.8" stroke="#afb1b3" stroke-width="1.4" fill="none"/><circle cx="9" cy="9" r="4.5" stroke="#afb1b3" stroke-width="1.4" fill="none"/><path d="M9 4.5 A4.5 4.5 0 0 0 9 13.5 Z" fill="#afb1b3"/></svg>
<div class="t" style="left:1233px;top:201.83px;font-size:16.34px;line-height:16.34px;color:#c4c4c4;font-weight:normal;font-family:'Liberation Sans';">GuardDemo</div>
<svg class="a" style="left:1328px;top:205px;" width="12" height="8" viewBox="0 0 12 8"><path d="M1.5 1.5 L6 6 L10.5 1.5" stroke="#8e9092" stroke-width="1.4" fill="none"/></svg>
<div class="a" style="left:1346px;top:198px;width:1px;height:23px;background:#505254;"></div>
<svg class="a" style="left:1358px;top:200px;" width="19" height="19" viewBox="0 0 19 19"><circle cx="9.4" cy="9.3" r="8.4" fill="#b8b9bb"/><path d="M3.2 7.5 C4.5 10 6 12.5 7.2 15.2 L6 15.6 C4.5 14 3 11.5 3 8 Z" fill="#3c3f41"/><path d="M5.2 8 L7.5 7 L9.5 5.5 L10.5 3 C13 4 14.8 7 14.8 10 C14.8 12 14.2 13.5 13 14.8 C11.5 14 10.5 12.5 10 10.5 L9 8.8 L6 9.2 Z" fill="#3c3f41"/></svg>
<div class="t" style="left:1380px;top:201.69px;font-size:16.61px;line-height:16.61px;color:#c4c4c4;font-weight:normal;font-family:'Liberation Sans';">Chinese (zh / CN)</div>
<svg class="a" style="left:1518px;top:205px;" width="12" height="8" viewBox="0 0 12 8"><path d="M1.5 1.5 L6 6 L10.5 1.5" stroke="#8e9092" stroke-width="1.4" fill="none"/></svg>
<svg class="a" style="left:1800px;top:201px;" width="18" height="17" viewBox="0 0 18 17"><path d="M9 1 L17 16 L1 16 Z" fill="#f0a30a"/><rect x="8" y="6" width="2" height="6" fill="#3c3f41"/><rect x="8" y="13" width="2" height="2" fill="#3c3f41"/></svg>
<svg class="a" style="left:951px;top:236px;" width="20" height="14" viewBox="0 0 20 14"><path d="M1 7 C4 1 16 1 19 7 C16 13 4 13 1 7 Z" fill="#afb1b3"/><circle cx="10" cy="7" r="3.5" fill="#3c3f41"/><circle cx="10" cy="7" r="2" fill="#afb1b3"/></svg>
<svg class="a" style="left:966px;top:252px;" width="9" height="6" viewBox="0 0 9 6"><path d="M0.5 0.5 L8.5 0.5 L4.5 5 Z" fill="#d0d0d0"/></svg>
<svg class="a" style="left:981px;top:235px;" width="20" height="20" viewBox="0 0 20 20"><path d="M4 6 L4 12 A5 5 0 0 0 14 12 L14 6" stroke="#afb1b3" stroke-width="3.5" fill="none"/><rect x="12" y="2" width="4" height="4" fill="#3592c4"/><path d="M1 1 L18 19" stroke="#afb1b3" stroke-width="1.4"/></svg>
<div class="t" style="left:1018px;top:236.21px;font-size:15.58px;line-height:15.58px;color:#c8c8c8;font-weight:normal;font-family:'Liberation Sans';">0dp</div>
<svg class="a" style="left:1009px;top:248px;" width="44" height="8" viewBox="0 0 44 8"><path d="M1 1 L1 6 L43 6 L43 1" stroke="#8e9092" stroke-width="1.2" fill="none"/></svg>
<div class="a" style="left:1059px;top:233px;width:1px;height:23px;background:#505254;"></div>
<svg class="a" style="left:1068px;top:234px;" width="22" height="20" viewBox="0 0 22 20"><path d="M3 17 C6 17 6 8 8 5 C10 2 13 3 14 3" stroke="#afb1b3" stroke-width="1.8" fill="none"/><circle cx="3" cy="17" r="2.5" fill="#afb1b3"/><circle cx="15" cy="3" r="2.5" fill="#afb1b3"/><path d="M14 12 L20 18 M20 12 L14 18" stroke="#e05555" stroke-width="1.8"/></svg>
<svg class="a" style="left:1101px;top:233px;" width="22" height="22" viewBox="0 0 22 22"><path d="M2 19 L12 9" stroke="#afb1b3" stroke-width="3"/><path d="M14 2 L14 5 M19 7 L16 7 M18 3 L16 5 M11 3 L12 5 M19 11 L17 10" stroke="#3592c4" stroke-width="1.5"/></svg>
<div class="a" style="left:1131px;top:233px;width:1px;height:23px;background:#505254;"></div>
<svg class="a" style="left:1142px;top:234px;" width="22" height="22" viewBox="0 0 22 22"><path d="M3 1 L13 1 M8 1 L8 15 M3 15 L13 15" stroke="#afb1b3" stroke-width="2"/><rect x="6.5" y="5" width="3" height="1" fill="#afb1b3"/><path d="M12 17 L19 17 L15.5 21 Z" fill="#d0d0d0"/></svg>
<svg class="a" style="left:1800px;top:235px;" width="18" height="18" viewBox="0 0 18 18"><circle cx="9" cy="9" r="8.5" fill="#3592c4"/><text x="9" y="13.5" font-size="12" font-weight="bold" text-anchor="middle" font-family="Liberation Sans" fill="#2d2e30">?</text></svg>
<svg class="a" style="left:1335px;top:309px;" width="12" height="18" viewBox="0 0 12 18"><path d="M4.6 1.2 A5 5 0 0 0 4.5 10 L4.5 17 L7.5 17 L7.5 10 A5 5 0 0 0 7.4 1.2 L7.4 5 L4.6 5 Z" fill="#b8b8b8"/></svg>
<svg class="a" style="left:1721px;top:309px;" width="12" height="18" viewBox="0 0 12 18"><path d="M4.6 1.2 A5 5 0 0 0 4.5 10 L4.5 17 L7.5 17 L7.5 10 A5 5 0 0 0 7.4 1.2 L7.4 5 L4.6 5 Z" fill="#b8b8b8"/></svg>
<div class="a" style="left:1028px;top:336px;width:329px;height:584px;background:#ffffff;"></div>
<svg class="a" style="left:1162px;top:396px;" width="60" height="64" viewBox="0 0 60 64"><path d="M30.5 5.7 L52.9 19.2 C52.9 38 43 50 30.5 57.7 C18 50 7.9 38 7.9 19.2 Z" fill="#2d6cfa"/><path d="M30.5 10.8 L48.3 21.5 C48.3 37 40 47 30.5 52.6 C21 47 12.7 37 12.7 21.5 Z" fill="#ffffff"/><path d="M16.4 24.3 L26.6 17 L30.5 24.3 L34.5 17 L44.4 24.3 C44.4 35 38 43 30.5 47.5 C23 43 16.4 35 16.4 24.3 Z" fill="#2d6cfa"/><path d="M30.5 24.3 L35.1 33.4 L30.5 40.4 L25.7 33.4 Z" fill="#ffffff"/></svg>
<div class="t" style="left:1123.5px;top:475.8px;font-size:18.2px;line-height:18.2px;color:#151515;font-weight:600">移动 <span style="font-weight:bold">Guard</span> 示例</div>
<div class="a" style="left:1076px;top:549px;width:259px;height:2px;background:#c2c2c2;"></div>
<svg class="a" style="left:1057px;top:533px;" width="13" height="12" viewBox="0 0 13 12"><rect x="0.7" y="1" width="11.6" height="10" stroke="#a8a8a8" stroke-width="1.2" fill="none"/><path d="M1 1.5 L6.5 6.5 L12 1.5" stroke="#a8a8a8" stroke-width="1.2" fill="none"/></svg>
<div class="t" style="left:1076px;top:533.94px;font-size:12.12px;line-height:12.12px;color:#8a8a8a;font-weight:normal;font-family:'Liberation Sans';">请输入邮箱</div>
<div class="a" style="left:1076px;top:602px;width:259px;height:2px;background:#c2c2c2;"></div>
<svg class="a" style="left:1058px;top:585px;" width="11" height="14" viewBox="0 0 11 14"><path d="M2.5 6 L2.5 4 A3 3 0 0 1 8.5 4 L8.5 6" stroke="#a8a8a8" stroke-width="1.1" fill="none"/><rect x="0.7" y="6" width="9.6" height="7.3" rx="1" stroke="#a8a8a8" stroke-width="1.1" fill="none"/><rect x="4.8" y="8.5" width="1.4" height="2.5" fill="#a8a8a8"/></svg>
<div class="t" style="left:1076px;top:586.94px;font-size:12.12px;line-height:12.12px;color:#8a8a8a;font-weight:normal;font-family:'Liberation Sans';">请输入密码</div>
<div class="a" style="left:1076px;top:655px;width:259px;height:2px;background:#c2c2c2;"></div>
<svg class="a" style="left:1058px;top:638px;" width="11" height="14" viewBox="0 0 11 14"><path d="M2.5 6 L2.5 4 A3 3 0 0 1 8.5 4 L8.5 6" stroke="#a8a8a8" stroke-width="1.1" fill="none"/><rect x="0.7" y="6" width="9.6" height="7.3" rx="1" stroke="#a8a8a8" stroke-width="1.1" fill="none"/><rect x="4.8" y="8.5" width="1.4" height="2.5" fill="#a8a8a8"/></svg>
<div class="t" style="left:1076px;top:639.96px;font-size:12.09px;line-height:12.09px;color:#8a8a8a;font-weight:normal;font-family:'Liberation Sans';">请再次输入密码</div>
<div class="a" style="left:1413px;top:335px;width:333px;height:587px;background:#222426;"></div>
<div class="a" style="left:1414px;top:336px;width:331px;height:585px;background:#015f71;"></div>
<svg class="a" style="left:1414px;top:336px;" width="331" height="585" viewBox="0 0 331 585"><rect x="1" y="1" width="329" height="583" stroke="#56b8d0" stroke-width="1.5" stroke-dasharray="4 1.2" fill="none"/></svg>
<div class="a" style="left:1552px;top:401px;width:56px;height:56px;background:#107587;"></div>
<svg class="a" style="left:1552px;top:401px;" width="56" height="56" viewBox="0 0 56 56"><rect x="0.8" y="0.8" width="54.4" height="54.4" stroke="#6ccbe0" stroke-width="1.6" stroke-dasharray="3 1" fill="none"/></svg>
<div class="t" style="left:1552px;top:401px;width:56px;height:56px;line-height:56px;text-align:center;font-size:7.5px;color:#5eaabb;letter-spacing:0.55px">app_logo</div>
<div class="a" style="left:1509px;top:470px;width:141px;height:27px;background:#107587;"></div>
<svg class="a" style="left:1509px;top:470px;" width="141" height="27" viewBox="0 0 141 27"><rect x="0.8" y="0.8" width="139.4" height="25.4" stroke="#6ccbe0" stroke-width="1.6" stroke-dasharray="3 1" fill="none"/></svg>
<div class="t" style="left:1509px;top:470px;width:141px;height:27px;line-height:27px;text-align:center;font-size:9.5px;color:#5eaabb;letter-spacing:0.55px">app_name</div>
<div class="a" style="left:1434px;top:522px;width:291px;height:51px;background:#107587;"></div>
<svg class="a" style="left:1434px;top:522px;" width="291" height="51" viewBox="0 0 291 51"><rect x="0.8" y="0.8" width="289.4" height="49.4" stroke="#6ccbe0" stroke-width="1.6" stroke-dasharray="3 1" fill="none"/></svg>
<div class="t" style="left:1434px;top:522px;width:291px;height:51px;line-height:51px;text-align:center;font-size:9.5px;color:#5eaabb;letter-spacing:0.55px">email</div>
<div class="a" style="left:1434px;top:575px;width:291px;height:51px;background:#107587;"></div>
<svg class="a" style="left:1434px;top:575px;" width="291" height="51" viewBox="0 0 291 51"><rect x="0.8" y="0.8" width="289.4" height="49.4" stroke="#6ccbe0" stroke-width="1.6" stroke-dasharray="3 1" fill="none"/></svg>
<div class="t" style="left:1434px;top:575px;width:291px;height:51px;line-height:51px;text-align:center;font-size:9.5px;color:#5eaabb;letter-spacing:0.55px">password</div>
<div class="a" style="left:1434px;top:628px;width:291px;height:52px;background:#107587;"></div>
<svg class="a" style="left:1434px;top:628px;" width="291" height="52" viewBox="0 0 291 52"><rect x="0.8" y="0.8" width="289.4" height="50.4" stroke="#6ccbe0" stroke-width="1.6" stroke-dasharray="3 1" fill="none"/></svg>
<div class="t" style="left:1434px;top:628px;width:291px;height:52px;line-height:52px;text-align:center;font-size:9.5px;color:#5eaabb;letter-spacing:0.55px">password_confirm</div>
<svg class="a" style="left:1360px;top:924px;" width="24" height="22" viewBox="0 0 24 22"><path d="M2 21 L23 1 M11 21 L23 10" stroke="#8a8c8e" stroke-width="1"/></svg>
<div class="a" style="left:1774px;top:799px;width:34px;height:36px;background:#2d2e30;border:1px solid #45484a;border-radius:5px;"></div>
<svg class="a" style="left:1782px;top:806px;" width="18" height="20" viewBox="0 0 18 20"><path d="M5 10 L5 4 A1.2 1.2 0 0 1 7.4 4 L7.4 9 L7.4 2.5 A1.2 1.2 0 0 1 9.8 2.5 L9.8 9 L9.8 3 A1.2 1.2 0 0 1 12.2 3 L12.2 9.5 L12.2 5 A1.2 1.2 0 0 1 14.6 5 L14.6 13 C14.6 17 12 19 9 19 C6 19 4.5 17 2 13 L1 11.5 A1.3 1.3 0 0 1 3.2 10 Z" fill="#d0d0d0"/></svg>
<div class="a" style="left:1774px;top:841px;width:34px;height:130px;background:#2d2e30;border:1px solid #45484a;border-radius:5px;"></div>
<svg class="a" style="left:1784px;top:851px;" width="14" height="14" viewBox="0 0 14 14"><path d="M7 1 L7 13 M1 7 L13 7" stroke="#d0d0d0" stroke-width="2.2"/></svg>
<svg class="a" style="left:1784px;top:883px;" width="14" height="14" viewBox="0 0 14 14"><path d="M1 7 L13 7" stroke="#d0d0d0" stroke-width="2.2"/></svg>
<div class="t" style="left:1782px;top:916.12px;font-size:11.76px;line-height:11.76px;color:#d0d0d0;font-weight:bold;font-family:'Liberation Sans';">1:1</div>
<svg class="a" style="left:1781px;top:944px;" width="19" height="17" viewBox="0 0 19 17"><rect x="1" y="1" width="17" height="14" stroke="#c8c8c8" stroke-width="1.5" fill="none"/><path d="M4 7 L4 4 L7 4 M15 9 L15 12 L12 12" stroke="#c8c8c8" stroke-width="1.3" fill="none"/></svg>
<div class="a" style="left:1827px;top:192px;width:28px;height:804px;background:#3c3f41;"></div>
<div class="a" style="left:1827px;top:192px;width:1px;height:804px;background:#2f3133;"></div>
<svg class="a" style="left:1832px;top:205px;" width="17" height="16" viewBox="0 0 17 16"><path d="M3 1 L3 15 M8.5 1 L8.5 15 M14 1 L14 15" stroke="#b0b0b0" stroke-width="1.4"/><rect x="1" y="9" width="4" height="3" fill="#b0b0b0"/><rect x="6.5" y="4" width="4" height="3" fill="#b0b0b0"/><rect x="12" y="10" width="4" height="3" fill="#b0b0b0"/></svg>
<div class="t" style="left:1811.0px;top:249.9px;width:60px;text-align:center;font-size:14.2px;line-height:14.2px;color:#c0c0c0;font-weight:normal;transform:rotate(90deg);">Attributes</div>
<svg class="a" style="left:1857px;top:121px;" width="18" height="16" viewBox="0 0 18 16"><path d="M1 14 C1 7 4 4 9 4 C12 4 14 5 15 2 C17 3 18 6 16 8 L16 14 L14 14 L13 11 L6 11 L5 14 Z" fill="#b0b0b0"/></svg>
<div class="t" style="left:1846.5px;top:155.67px;width:41px;text-align:center;font-size:13.66px;line-height:13.66px;color:#c0c0c0;font-weight:normal;transform:rotate(90deg);">Gradle</div>
<svg class="a" style="left:1858px;top:209px;" width="17" height="17" viewBox="0 0 17 17"><rect x="1" y="4" width="11" height="10" stroke="#b0b0b0" stroke-width="1.4" fill="none"/><rect x="7" y="1" width="9" height="14" rx="1" stroke="#b0b0b0" stroke-width="1.4" fill="#3c3f41"/></svg>
<div class="t" style="left:1816.5px;top:274.56px;width:101px;text-align:center;font-size:13.87px;line-height:13.87px;color:#c0c0c0;font-weight:normal;transform:rotate(90deg);">Device Manager</div>
<svg class="a" style="left:1858px;top:761px;" width="17" height="17" viewBox="0 0 17 17"><rect x="1" y="4" width="11" height="10" stroke="#b0b0b0" stroke-width="1.4" fill="none"/><rect x="7" y="1" width="9" height="14" rx="1" stroke="#b0b0b0" stroke-width="1.4" fill="#3c3f41"/><circle cx="13" cy="11" r="2.5" fill="#3d7fc6"/></svg>
<div class="t" style="left:1840.0px;top:804.25px;width:54px;text-align:center;font-size:13.5px;line-height:13.5px;color:#c0c0c0;font-weight:normal;transform:rotate(90deg);">Emulator</div>
<svg class="a" style="left:1859px;top:865px;" width="15" height="17" viewBox="0 0 15 17"><rect x="2" y="1" width="11" height="15" rx="1" stroke="#b0b0b0" stroke-width="1.4" fill="none"/><rect x="2" y="12" width="11" height="4" fill="#b0b0b0"/><rect x="6" y="13.2" width="3" height="1.4" fill="#3c3f41"/></svg>
<div class="t" style="left:1806.0px;top:940.18px;width:122px;text-align:center;font-size:13.64px;line-height:13.64px;color:#c0c0c0;font-weight:normal;transform:rotate(90deg);">Device File Explorer</div>
<div class="t" style="left:31.5px;top:133.59px;width:43px;text-align:center;font-size:13.82px;line-height:13.82px;color:#c0c0c0;font-weight:normal;transform:rotate(-90deg);">Project</div>
<svg class="a" style="left:46px;top:169px;" width="15" height="14" viewBox="0 0 15 14"><path d="M1 1 L6 1 L7 3 L14 3 L14 13 L1 13 Z" fill="#b0b0b0"/></svg>
<div class="t" style="left:-5.0px;top:263.18px;width:116px;text-align:center;font-size:13.64px;line-height:13.64px;color:#c0c0c0;font-weight:normal;transform:rotate(-90deg);">Resource Manager</div>
<svg class="a" style="left:46px;top:333px;" width="15" height="15" viewBox="0 0 15 15"><path d="M4 1 L7 6 L1 6 Z" fill="#b0b0b0"/><rect x="1" y="8" width="6" height="6" fill="#b0b0b0"/><circle cx="11" cy="11" r="3.2" fill="#b0b0b0"/></svg>
<div class="t" style="left:23.0px;top:714.61px;width:60px;text-align:center;font-size:14.79px;line-height:14.79px;color:#c0c0c0;font-weight:normal;transform:rotate(-90deg);">Structure</div>
<svg class="a" style="left:47px;top:757px;" width="13" height="13" viewBox="0 0 13 13"><rect x="0" y="6" width="5" height="5" fill="#b0b0b0"/><rect x="6" y="6" width="6" height="5" fill="#b0b0b0"/><rect x="6" y="0" width="6" height="5" fill="#b0b0b0"/></svg>
<div class="t" style="left:24.0px;top:818.95px;width:58px;text-align:center;font-size:14.1px;line-height:14.1px;color:#c0c0c0;font-weight:normal;transform:rotate(-90deg);">Favorites</div>
<svg class="a" style="left:45px;top:860px;" width="16" height="16" viewBox="0 0 16 16"><path d="M8 0.5 L10.2 5.5 L15.5 6 L11.5 9.6 L12.7 15 L8 12.2 L3.3 15 L4.5 9.6 L0.5 6 L5.8 5.5 Z" fill="#b0b0b0"/></svg>
<div class="t" style="left:10.5px;top:938.53px;width:85px;text-align:center;font-size:13.94px;line-height:13.94px;color:#c0c0c0;font-weight:normal;transform:rotate(-90deg);">Build Variants</div>
<svg class="a" style="left:45px;top:991px;" width="16" height="14" viewBox="0 0 16 14"><path d="M1 13 A7 7 0 0 1 15 13 Z" fill="#b0b0b0"/><path d="M3 1 L5 5 M13 1 L11 5" stroke="#b0b0b0" stroke-width="1.5"/></svg>
<div class="a" style="left:66px;top:996px;width:1789px;height:27px;background:#313335;"></div>
<div class="a" style="left:40px;top:1023px;width:1840px;height:1px;background:#2b2d2f;"></div>
<div class="t" style="left:149px;top:1003.16px;font-size:15.68px;line-height:15.68px;color:#c8c8c8;font-weight:normal;font-family:'Liberation Sans';">androidx.constraintlayout.widget.ConstraintLayout</div>
<svg class="a" style="left:509px;top:1005px;" width="6" height="10" viewBox="0 0 6 10"><path d="M1 1 L4.5 5 L1 9" stroke="#6b6e70" stroke-width="1.2" fill="none"/></svg>
<div class="t" style="left:526px;top:1003.18px;font-size:15.64px;line-height:15.64px;color:#c8c8c8;font-weight:normal;font-family:'Liberation Sans';">cn.authing.guard.PasswordConfirmEditText</div>
<svg class="a" style="left:78px;top:1028px;" width="16" height="17" viewBox="0 0 16 17"><path d="M1 1 L12 7.5 L1 14 Z" fill="#b0b0b0"/><circle cx="13" cy="14" r="2.3" fill="#3d7fc6"/></svg>
<div class="t" style="left:98px;top:1030.73px;font-size:12.54px;line-height:12.54px;color:#c4c4c4;font-weight:normal;font-family:'Liberation Sans';">Run</div>
<svg class="a" style="left:146px;top:1030px;" width="15" height="13" viewBox="0 0 15 13"><rect x="0" y="0.5" width="2.5" height="2.5" fill="#b0b0b0"/><rect x="4" y="0.5" width="10" height="2.2" fill="#b0b0b0"/><rect x="0" y="5" width="2.5" height="2.5" fill="#b0b0b0"/><rect x="4" y="5" width="10" height="2.2" fill="#b0b0b0"/><rect x="0" y="9.5" width="2.5" height="2.5" fill="#b0b0b0"/><rect x="4" y="9.5" width="10" height="2.2" fill="#b0b0b0"/></svg>
<div class="t" style="left:165px;top:1030.56px;font-size:12.89px;line-height:12.89px;color:#c4c4c4;font-weight:normal;font-family:'Liberation Sans';">TODO</div>
<svg class="a" style="left:227px;top:1029px;" width="15" height="15" viewBox="0 0 15 15"><circle cx="7.5" cy="7.5" r="7" fill="#b0b0b0"/><rect x="6.5" y="3" width="2" height="6" fill="#3c3f41"/><rect x="6.5" y="10" width="2" height="2" fill="#3c3f41"/></svg>
<div class="t" style="left:247px;top:1030.13px;font-size:13.73px;line-height:13.73px;color:#c4c4c4;font-weight:normal;font-family:'Liberation Sans';">Problems</div>
<svg class="a" style="left:331px;top:1029px;" width="16" height="14" viewBox="0 0 16 14"><rect x="0" y="0" width="16" height="14" fill="#b0b0b0"/><path d="M3 3 L7 6 L3 9" stroke="#3c3f41" stroke-width="1.5" fill="none"/><rect x="8" y="10" width="5" height="1.5" fill="#3c3f41"/></svg>
<div class="t" style="left:352px;top:1029.98px;font-size:14.03px;line-height:14.03px;color:#c4c4c4;font-weight:normal;font-family:'Liberation Sans';">Terminal</div>
<svg class="a" style="left:430px;top:1030px;" width="15" height="13" viewBox="0 0 15 13"><rect x="0" y="1" width="14" height="2.2" fill="#b0b0b0"/><rect x="0" y="5.5" width="9" height="2.2" fill="#b0b0b0"/><rect x="0" y="10" width="12" height="2.2" fill="#b0b0b0"/></svg>
<div class="t" style="left:450px;top:1030.01px;font-size:13.99px;line-height:13.99px;color:#c4c4c4;font-weight:normal;font-family:'Liberation Sans';">Logcat</div>
<svg class="a" style="left:517px;top:1027px;" width="17" height="17" viewBox="0 0 17 17"><path d="M2 5 L7 1 L10 3 L8 5 L16 14 L14 16 L6 7 L4 9 Z" fill="#b0b0b0"/></svg>
<div class="t" style="left:539px;top:1030.48px;font-size:13.04px;line-height:13.04px;color:#c4c4c4;font-weight:normal;font-family:'Liberation Sans';">Build</div>
<svg class="a" style="left:591px;top:1029px;" width="17" height="14" viewBox="0 0 17 14"><path d="M2 13 A7 7 0 0 1 15 9" stroke="#b0b0b0" stroke-width="2.4" fill="none"/><path d="M8 12 L12 6" stroke="#b0b0b0" stroke-width="2"/></svg>
<div class="t" style="left:612px;top:1030.06px;font-size:13.89px;line-height:13.89px;color:#c4c4c4;font-weight:normal;font-family:'Liberation Sans';">Profiler</div>
<svg class="a" style="left:685px;top:1027px;" width="16" height="19" viewBox="0 0 16 19"><rect x="3" y="2" width="10" height="6" rx="2" fill="#b0b0b0"/><rect x="2" y="8" width="12" height="9" rx="1" fill="#b0b0b0"/><path d="M0 11 L2 11 M14 11 L16 11 M0 14 L2 14 M14 14 L16 14" stroke="#b0b0b0" stroke-width="1.2"/></svg>
<div class="t" style="left:706px;top:1030.05px;font-size:13.91px;line-height:13.91px;color:#c4c4c4;font-weight:normal;font-family:'Liberation Sans';">App Inspection</div>
<svg class="a" style="left:1603px;top:1028px;" width="18" height="18" viewBox="0 0 18 18"><path d="M9.5 1.5 A7.3 7.3 0 1 1 9.5 16.3 L2.2 16.3 L2.2 9 A7.3 7.3 0 0 1 9.5 1.5 Z" stroke="#b0b0b0" stroke-width="1.5" fill="none"/></svg>
<div class="t" style="left:1626px;top:1030.34px;font-size:13.32px;line-height:13.32px;color:#c4c4c4;font-weight:normal;font-family:'Liberation Sans';">Event Log</div>
<svg class="a" style="left:1714px;top:1027px;" width="18" height="18" viewBox="0 0 18 18"><path d="M1 12 L1 1 L12 1" stroke="#b0b0b0" stroke-width="1.4" fill="none"/><path d="M4 14 L4 4 L15 4" stroke="#b0b0b0" stroke-width="1.4" fill="none"/><circle cx="11" cy="11" r="3" stroke="#b0b0b0" stroke-width="1.4" fill="none"/><path d="M13 13 L16 16" stroke="#b0b0b0" stroke-width="1.6"/></svg>
<div class="t" style="left:1736px;top:1029.96px;font-size:14.07px;line-height:14.07px;color:#c4c4c4;font-weight:normal;font-family:'Liberation Sans';">Layout Inspector</div>
<svg class="a" style="left:47px;top:1062px;" width="16" height="16" viewBox="0 0 16 16"><rect x="4" y="1" width="11" height="11" stroke="#b0b0b0" stroke-width="1.2" fill="none"/><path d="M1 4 L1 15 L12 15" stroke="#b0b0b0" stroke-width="1.2" fill="none"/></svg>
<div class="t" style="left:78px;top:1064.11px;font-size:13.78px;line-height:13.78px;color:#c4c4c4;font-weight:normal;font-family:'Liberation Sans';">Launch succeeded (15 minutes ago)</div>
<div class="t" style="left:1433px;top:1064.03px;font-size:13.94px;line-height:13.94px;color:#c4c4c4;font-weight:normal;font-family:'Liberation Sans';">63:5 (624 chars, 13 line breaks)</div>
<div class="t" style="left:1645px;top:1064.58px;font-size:12.85px;line-height:12.85px;color:#c4c4c4;font-weight:normal;font-family:'Liberation Sans';">LF</div>
<div class="t" style="left:1674px;top:1064.12px;font-size:13.77px;line-height:13.77px;color:#7f8183;font-weight:normal;font-family:'Liberation Sans';">UTF-8</div>
<div class="t" style="left:1729px;top:1064.13px;font-size:13.74px;line-height:13.74px;color:#c4c4c4;font-weight:normal;font-family:'Liberation Sans';">4 spaces</div>
<svg class="a" style="left:1797px;top:1061px;" width="16" height="16" viewBox="0 0 16 16"><path d="M5 8 L5 4.5 A3 3 0 0 0 -1 4.5" stroke="#b0b0b0" stroke-width="1.6" fill="none" transform="translate(1 0)"/><rect x="4" y="8" width="11" height="8" fill="#b0b0b0"/></svg>
<svg class="a" style="left:1827px;top:1062px;" width="17" height="17" viewBox="0 0 17 17"><circle cx="8.5" cy="8.5" r="8" fill="#b0b0b0"/><circle cx="6" cy="6.5" r="1" fill="#3c3f41"/><circle cx="11" cy="6.5" r="1" fill="#3c3f41"/><path d="M4.5 10 C6 13 11 13 12.5 10" stroke="#3c3f41" stroke-width="1.3" fill="none"/></svg>
<svg class="a" style="left:1857px;top:1062px;" width="17" height="17" viewBox="0 0 17 17"><circle cx="8.5" cy="8.5" r="8" fill="#b0b0b0"/><circle cx="6" cy="6.5" r="1" fill="#3c3f41"/><circle cx="11" cy="6.5" r="1" fill="#3c3f41"/><path d="M4.5 12.5 C6 9.5 11 9.5 12.5 12.5" stroke="#3c3f41" stroke-width="1.3" fill="none"/></svg>
</body></html>
